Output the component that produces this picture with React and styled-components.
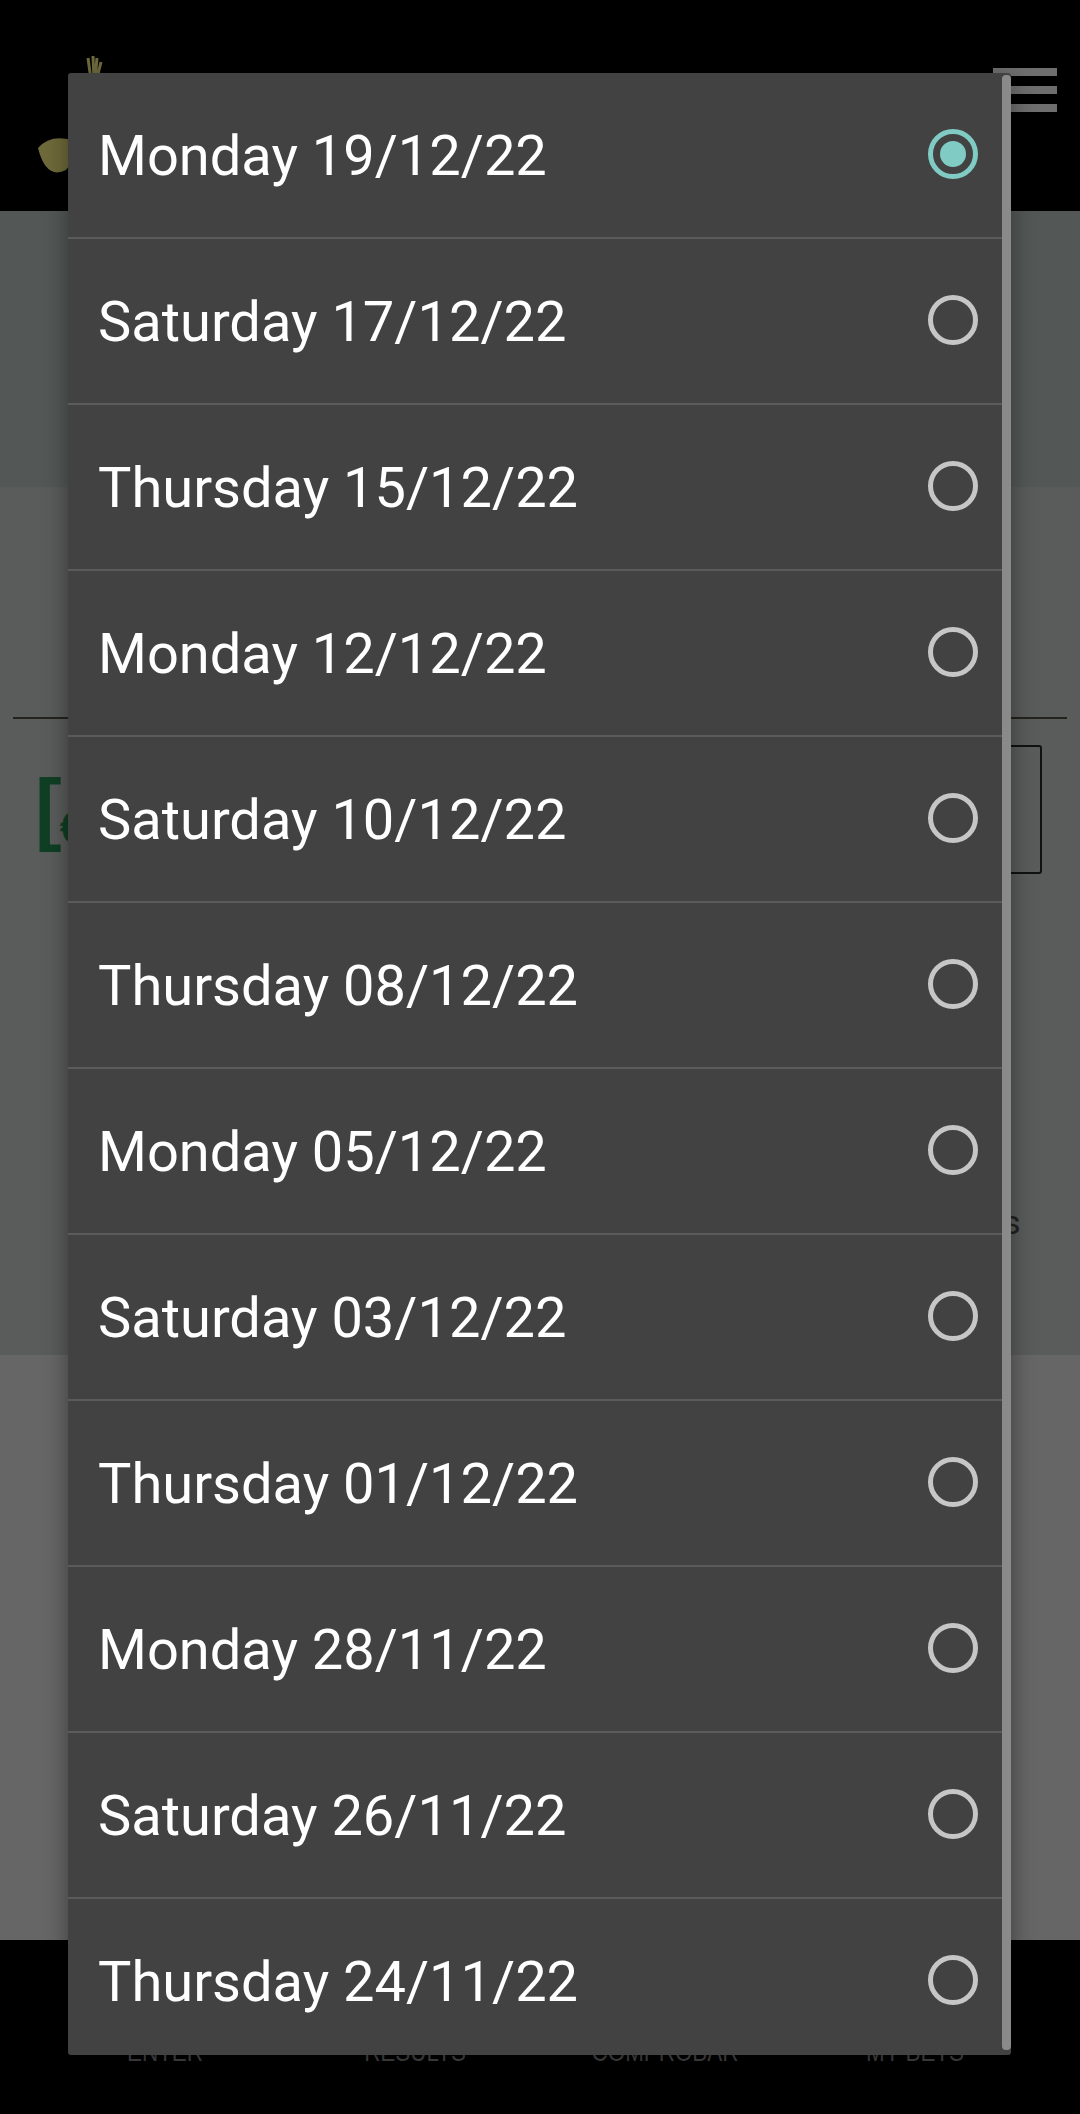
import React from 'react';
import styled, { createGlobalStyle } from 'styled-components';

const dates = [
	'Monday 19/12/22',
	'Saturday 17/12/22',
	'Thursday 15/12/22',
	'Monday 12/12/22',
	'Saturday 10/12/22',
	'Thursday 08/12/22',
	'Monday 05/12/22',
	'Saturday 03/12/22',
	'Thursday 01/12/22',
	'Monday 28/11/22',
	'Saturday 26/11/22',
	'Thursday 24/11/22',
];

const tabs = ['ENTER', 'RESULTS', 'COMPROBAR', 'MY BETS'];

const Global = createGlobalStyle`
	html, body {
		margin: 0;
		padding: 0;
		background: #000;
	}
	body {
		font-family: Roboto, "Noto Sans", sans-serif;
	}
`

class App extends React.Component {
	render() {
		return (
			<>
				<Global />
				<Page>
					<Header>
						<Logo viewBox="0 0 120 140">
							<path d="M58 10 l3 22 M63 8 l1 24 M67 10 l-2 22 M71 14 l-5 20" stroke="#6f6a3c" strokeWidth="3" fill="none" />
							<ellipse cx="62" cy="44" rx="10" ry="8" fill="#6d683a" />
							<path d="M8 100 q12 -14 34 -8 q6 16 -6 30 q-20 10 -28 -22z" fill="#6f6a3a" />
						</Logo>
						<Burger>
							<span />
							<span />
							<span />
						</Burger>
					</Header>
					<Banner />
					<Content>
						<Rule />
						<FilterRow>
							<Euro>
								<span>[</span>
								<b>€</b>
							</Euro>
							<SelectBox />
						</FilterRow>
						<Paren>(</Paren>
						<Trail>s</Trail>
					</Content>
					<Lower />
					<Nav>
						{tabs.map(t => <Tab key={t}>{t}</Tab>)}
					</Nav>
				</Page>
				<Dialog>
					<List>
						{dates.map((d, i) => (
							<Row key={d}>
								<Label>{d}</Label>
								<Radio checked={i === 0} />
							</Row>
						))}
					</List>
					<Thumb />
				</Dialog>
			</>
		)
	}
}

const Page = styled.div`
	width: 1080px;
	height: 2114px;
	display: flex;
	flex-direction: column;
	overflow: hidden;
`
const Header = styled.div`
	height: 211px;
	background: #000;
	display: flex;
	justify-content: space-between;
	align-items: flex-start;
	padding: 0 23px 0 30px;
	box-sizing: border-box;
`
const Logo = styled.svg`
	width: 120px;
	height: 140px;
	margin-top: 48px;
`
const Burger = styled.div`
	margin-top: 68px;
	width: 64px;
	display: flex;
	flex-direction: column;
	gap: 10px;
	span {
		display: block;
		height: 8px;
		background: #6e6e6e;
	}
`
const Banner = styled.div`
	height: 276px;
	background: #535856;
`
const Content = styled.div`
	height: 868px;
	background: #5a5c5b;
	padding: 230px 13px 0;
	box-sizing: border-box;
	display: flex;
	flex-direction: column;
`
const Rule = styled.div`
	height: 2px;
	background: #24241c;
`
const FilterRow = styled.div`
	margin-top: 26px;
	display: flex;
	justify-content: space-between;
	align-items: flex-start;
`
const Euro = styled.div`
	margin: 23px 0 0 22px;
	color: #0f3f25;
	font-family: "Liberation Sans", sans-serif;
	font-size: 80px;
	line-height: 80px;
	display: flex;
	span { font-weight: 700; }
	b { font-size: 44px; margin: 20px 0 0 -2px; }
`
const SelectBox = styled.div`
	width: 120px;
	height: 125px;
	margin-right: 25px;
	border: 2px solid #111;
	border-radius: 3px;
`
const Paren = styled.div`
	margin: 40px 0 0 52px;
	font-size: 50px;
	color: #0a0a0a;
`
const Trail = styled.div`
	margin: 230px 0 0 990px;
	font-size: 34px;
	color: #222;
`
const Lower = styled.div`
	height: 585px;
	background: #666;
`
const Nav = styled.div`
	flex: 1;
	background: #000;
	display: grid;
	grid-template-columns: repeat(4, 1fr);
	padding: 0 40px;
`
const Tab = styled.div`
	text-align: center;
	padding-top: 96px;
	font-family: "Liberation Sans", sans-serif;
	font-size: 28px;
	color: #4a4a4a;
	transform: scaleX(0.8);
`
const Dialog = styled.div`
	position: fixed;
	left: 68px;
	top: 73px;
	width: 943px;
	height: 1982px;
	background: #424242;
	border-radius: 3px;
	overflow: hidden;
	box-shadow: 0 8px 24px rgba(0, 0, 0, 0.4);
`
const List = styled.div`
	display: flex;
	flex-direction: column;
`
const Row = styled.div`
	flex: none;
	border-bottom: 2px solid #5b5b5b;
	display: flex;
	align-items: center;
	justify-content: space-between;
	padding: 4px 33px 0 30px;
	box-sizing: content-box;
	height: 160px;
`
const Label = styled.div`
	font-family: Roboto, sans-serif;
	font-size: 56px;
	color: #fff;
	line-height: 1.172;
`
const Radio = styled.div`
	width: 50px;
	height: 50px;
	box-sizing: border-box;
	border-radius: 50%;
	border: 5px solid ${p => (p.checked ? '#80cbc4' : '#c6c6c6')};
	display: flex;
	align-items: center;
	justify-content: center;
	margin-top: -6px;
	&::after {
		content: '';
		width: 26px;
		height: 26px;
		border-radius: 50%;
		background: #80cbc4;
		display: ${p => (p.checked ? 'block' : 'none')};
	}
`
const Thumb = styled.div`
	position: absolute;
	right: 0;
	top: 2px;
	bottom: 5px;
	width: 9px;
	border-radius: 4px;
	background: #8a8a8a;
`

export default App
